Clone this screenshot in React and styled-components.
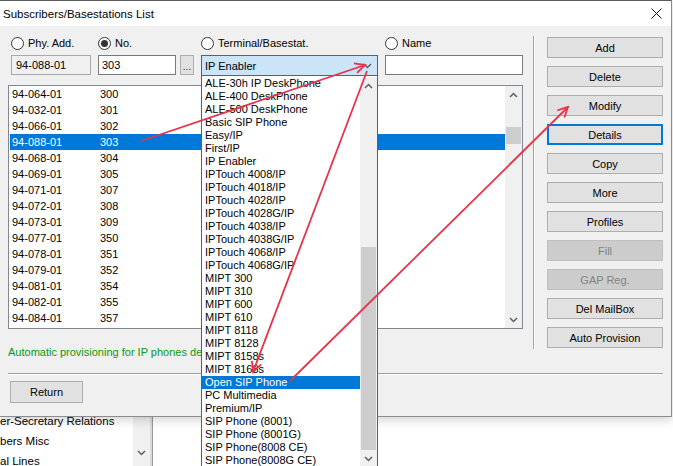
import React from 'react';
import styled, { createGlobalStyle, css } from 'styled-components';

const Global = createGlobalStyle`
  html, body { margin: 0; padding: 0; background: #fff; }
  body {
    font-family: "Liberation Sans", Arial, sans-serif;
    font-size: 11px;
    color: #000;
  }
  #root { width: 673px; height: 466px; }
`;

const Page = styled.div`
  position: relative;
  width: 673px;
  height: 466px;
  overflow: hidden;
  background: #fff;
  display: flex;
  flex-direction: column;
`;

const Window = styled.div`
  position: relative;
  z-index: 2;
  width: 672px;
  height: 417px;
  flex-shrink: 0;
  box-sizing: border-box;
  border-top: 1px solid #5c5c5c;
  border-right: 1px solid #8c8c8c;
  border-bottom: 1px solid #8c8c8c;
  background: #f0f0f0;
  box-shadow: 0 3px 10px rgba(0, 0, 0, 0.18);
  display: flex;
  flex-direction: column;
`;

const TitleBar = styled.div`
  height: 25px;
  flex-shrink: 0;
  background: #fff;
  display: flex;
  align-items: center;
  justify-content: space-between;
  padding: 0 9px 0 3px;
  font-size: 11.5px;
`;

const Body = styled.div`
  flex: 1;
  padding: 10px 8px 0 8px;
  display: flex;
  flex-direction: column;
`;

const MainRow = styled.div`
  display: flex;
  align-items: flex-start;
  gap: 10px;
`;

const LeftCol = styled.div`
  width: 515px;
  padding-top: 1px;
  display: flex;
  flex-direction: column;
`;

const RightCol = styled.div`
  border-left: 1px solid #a0a0a0;
  box-shadow: inset 1px 0 0 #fff;
  padding: 1px 0 1px 13px;
  display: flex;
  flex-direction: column;
  gap: 8px;
`;

const FieldRow = styled.div`
  margin-left: 3px;
  display: grid;
  grid-template-columns: 80px 96px 177px 138px;
  column-gap: 7px;
  align-items: start;
`;

const FieldGroup = styled.div`
  position: relative;
  display: flex;
  flex-direction: column;
  gap: 5px;
`;

const RadioLabel = styled.div`
  display: flex;
  align-items: center;
  gap: 4px;
  height: 13px;
  line-height: 13px;
  white-space: nowrap;
`;

const RadioCircle = styled.span`
  width: 13px;
  height: 13px;
  box-sizing: border-box;
  border: 1px solid #333;
  border-radius: 50%;
  background: #fff;
  display: flex;
  align-items: center;
  justify-content: center;
  flex-shrink: 0;
  &::after {
    content: '';
    width: 7px;
    height: 7px;
    border-radius: 50%;
    background: ${p => (p.$checked ? '#333' : 'transparent')};
  }
`;

const InputLine = styled.div`
  display: flex;
  gap: 4px;
`;

const TextBox = styled.div`
  box-sizing: border-box;
  height: 20px;
  width: ${p => p.$w}px;
  border: 1px solid ${p => (p.$readonly ? '#a8a8a8' : '#7a7a7a')};
  background: ${p => (p.$readonly ? '#f0f0f0' : '#fff')};
  padding: 0 ${p => (p.$readonly ? 4 : 3)}px;
  line-height: 18px;
  white-space: nowrap;
`;

const DotsButton = styled.div`
  box-sizing: border-box;
  width: 14px;
  height: 20px;
  border: 1px solid #adadad;
  background: #e1e1e1;
  display: flex;
  align-items: flex-end;
  justify-content: center;
  line-height: 14px;
  font-size: 10px;
  color: #333;
`;

const Combo = styled.div`
  position: relative;
  box-sizing: border-box;
  height: 21px;
  width: 177px;
  border: 1px solid #0078d7;
  background: #cce4f7;
  padding: 0 0 0 3px;
  display: flex;
  align-items: center;
  justify-content: space-between;
`;

const ComboArrow = styled.span`
  width: 17px;
  display: flex;
  justify-content: center;
  align-items: center;
  margin-right: 1px;
`;

const DropList = styled.div`
  position: absolute;
  top: 20px;
  left: -1px;
  width: 177px;
  box-sizing: border-box;
  border-left: 1px solid #0078d7;
  border-right: 1px solid #0078d7;
  background: #fff;
  padding-top: 1px;
  display: flex;
  z-index: 5;
`;

const DropItems = styled.div`
  flex: 1;
  display: flex;
  flex-direction: column;
`;

const DropItem = styled.div`
  height: 13px;
  line-height: 13px;
  padding-left: 3px;
  white-space: nowrap;
  ${p => p.$selected && css`
    background: #0078d7;
    color: #fff;
  `}
`;

const ListBox = styled.div`
  margin-top: 9px;
  box-sizing: border-box;
  width: 515px;
  height: 244px;
  border: 1px solid #828790;
  background: #fff;
  display: flex;
`;

const ListRows = styled.div`
  flex: 1;
  padding-left: 1px;
  display: flex;
  flex-direction: column;
`;

const ListRow = styled.div`
  height: 16px;
  line-height: 16px;
  display: grid;
  grid-template-columns: 88px 1fr;
  padding-left: 2px;
  ${p => p.$selected && css`
    background: #0078d7;
    color: #fff;
  `}
`;

const ScrollBar = styled.div`
  width: 17px;
  flex-shrink: 0;
  background: #f0f0f0;
  display: flex;
  flex-direction: column;
`;

const ScrollBtn = styled.div`
  height: 17px;
  flex-shrink: 0;
  display: flex;
  align-items: center;
  justify-content: center;
`;

const ScrollTrack = styled.div`
  flex: 1;
  display: flex;
  flex-direction: column;
`;

const Thumb = styled.div`
  margin: 0 1px;
  background: #cdcdcd;
`;

const Notice = styled.div`
  margin-top: 17px;
  height: 13px;
  line-height: 13px;
  color: #0a9a0a;
  white-space: nowrap;
  overflow: hidden;
`;

const Button = styled.div`
  box-sizing: border-box;
  width: ${p => p.$w || 116}px;
  height: ${p => p.$h || 21}px;
  border: 1px solid #adadad;
  background: #e1e1e1;
  display: flex;
  align-items: center;
  justify-content: center;
  white-space: nowrap;
  ${p => p.$focused && css`
    border: 2px solid #0078d7;
  `}
  ${p => p.$disabled && css`
    background: #cccccc;
    border-color: #bfbfbf;
    color: #838383;
  `}
`;

const HSeparator = styled.div`
  margin-top: 14px;
  border-top: 1px solid #a0a0a0;
  border-bottom: 1px solid #fff;
`;

const BottomBar = styled.div`
  padding: 6px 0 0 2px;
`;

const Backdrop = styled.div`
  flex: 1;
  display: flex;
  position: relative;
  z-index: 1;
`;

const BackList = styled.div`
  width: 133px;
  overflow: hidden;
  background: #fff;
  display: flex;
  flex-direction: column;
`;

const BackItems = styled.div`
  margin-top: -6px;
  display: flex;
  flex-direction: column;
`;

const BackItem = styled.div`
  height: 20px;
  line-height: 20px;
  font-size: 11.5px;
  white-space: nowrap;
`;

const BackScroll = styled.div`
  width: 17px;
  background: #f0f0f0;
  display: flex;
  flex-direction: column;
  padding-top: 27px;
`;

const BackDivider = styled.div`
  width: 2px;
  background: #dadada;
  border-right: 1px solid #9a9a9a;
`;

const BackFill = styled.div`
  flex: 1;
  background: #fff;
`;

const Overlay = styled.svg`
  position: absolute;
  left: 0;
  top: 0;
  width: 673px;
  height: 466px;
  z-index: 10;
  pointer-events: none;
`;

const Chevron = ({ up }) => (
  <svg width="9" height="6" viewBox="0 0 9 6">
    <polyline
      points={up ? '1,5 4.5,1.5 8,5' : '1,1 4.5,4.5 8,1'}
      fill="none"
      stroke="#606060"
      strokeWidth="1.5"
    />
  </svg>
);

const Scroll = ({ thumbTop, thumbHeight }) => (
  <ScrollBar>
    <ScrollBtn><Chevron up /></ScrollBtn>
    <ScrollTrack>
      <Thumb style={{ marginTop: thumbTop, height: thumbHeight }} />
    </ScrollTrack>
    <ScrollBtn><Chevron /></ScrollBtn>
  </ScrollBar>
);

const rows = [
  ['94-064-01', '300'], ['94-032-01', '301'], ['94-066-01', '302'], ['94-088-01', '303'],
  ['94-068-01', '304'], ['94-069-01', '305'], ['94-071-01', '307'], ['94-072-01', '308'],
  ['94-073-01', '309'], ['94-077-01', '350'], ['94-078-01', '351'], ['94-079-01', '352'],
  ['94-081-01', '354'], ['94-082-01', '355'], ['94-084-01', '357'],
];

const terminals = [
  'ALE-30h IP DeskPhone', 'ALE-400 DeskPhone', 'ALE-500 DeskPhone', 'Basic SIP Phone',
  'Easy/IP', 'First/IP', 'IP Enabler', 'IPTouch 4008/IP', 'IPTouch 4018/IP',
  'IPTouch 4028/IP', 'IPTouch 4028G/IP', 'IPTouch 4038/IP', 'IPTouch 4038G/IP',
  'IPTouch 4068/IP', 'IPTouch 4068G/IP', 'MIPT 300', 'MIPT 310', 'MIPT 600', 'MIPT 610',
  'MIPT 8118', 'MIPT 8128', 'MIPT 8158s', 'MIPT 8168s', 'Open SIP Phone', 'PC Multimedia',
  'Premium/IP', 'SIP Phone (8001)', 'SIP Phone (8001G)', 'SIP Phone(8008 CE)',
  'SIP Phone(8008G CE)',
];

const buttons = [
  { label: 'Add' }, { label: 'Delete' }, { label: 'Modify' }, { label: 'Details', focused: true },
  { label: 'Copy' }, { label: 'More' }, { label: 'Profiles' }, { label: 'Fill', disabled: true },
  { label: 'GAP Reg.', disabled: true }, { label: 'Del MailBox' }, { label: 'Auto Provision' },
];

const arrows = [
  [141, 141, 365, 65],
  [367, 71, 253, 372],
  [290, 381, 568, 107],
];

export default function App() {
  return (
    <Page>
      <Global />
      <Window>
        <TitleBar>
          <span>Subscribers/Basestations List</span>
          <svg width="11" height="11" viewBox="0 0 11 11">
            <path d="M0.5,0.5 L10.5,10.5 M10.5,0.5 L0.5,10.5" stroke="#111" strokeWidth="1" />
          </svg>
        </TitleBar>
        <Body>
          <MainRow>
            <LeftCol>
              <FieldRow>
                <FieldGroup>
                  <RadioLabel><RadioCircle />Phy. Add.</RadioLabel>
                  <TextBox $w={80} $readonly>94-088-01</TextBox>
                </FieldGroup>
                <FieldGroup>
                  <RadioLabel><RadioCircle $checked />No.</RadioLabel>
                  <InputLine>
                    <TextBox $w={78}>303</TextBox>
                    <DotsButton>...</DotsButton>
                  </InputLine>
                </FieldGroup>
                <FieldGroup>
                  <RadioLabel><RadioCircle />Terminal/Basestat.</RadioLabel>
                  <Combo>
                    <span>IP Enabler</span>
                    <ComboArrow><Chevron /></ComboArrow>
                    <DropList>
                      <DropItems>
                        {terminals.map(t => (
                          <DropItem key={t} $selected={t === 'Open SIP Phone'}>{t}</DropItem>
                        ))}
                      </DropItems>
                      <Scroll thumbTop={153} thumbHeight={203} />
                    </DropList>
                  </Combo>
                </FieldGroup>
                <FieldGroup>
                  <RadioLabel><RadioCircle />Name</RadioLabel>
                  <TextBox $w={138} />
                </FieldGroup>
              </FieldRow>
              <ListBox>
                <ListRows>
                  {rows.map(([a, n]) => (
                    <ListRow key={a} $selected={n === '303'}>
                      <span>{a}</span>
                      <span>{n}</span>
                    </ListRow>
                  ))}
                </ListRows>
                <Scroll thumbTop={24} thumbHeight={17} />
              </ListBox>
              <Notice>Automatic provisioning for IP phones deactivated</Notice>
            </LeftCol>
            <RightCol>
              {buttons.map(b => (
                <Button key={b.label} $focused={b.focused} $disabled={b.disabled}>
                  {b.label}
                </Button>
              ))}
            </RightCol>
          </MainRow>
          <HSeparator />
          <BottomBar>
            <Button $w={73} $h={22}>Return</Button>
          </BottomBar>
        </Body>
      </Window>
      <Backdrop>
        <BackList>
          <BackItems>
            <BackItem>er-Secretary Relations</BackItem>
            <BackItem>bers Misc</BackItem>
            <BackItem>al Lines</BackItem>
          </BackItems>
        </BackList>
        <BackScroll>
          <ScrollBtn><Chevron /></ScrollBtn>
        </BackScroll>
        <BackDivider />
        <BackFill />
      </Backdrop>
      <Overlay viewBox="0 0 673 466">
        <defs>
          <marker
            id="head"
            markerUnits="userSpaceOnUse"
            markerWidth="14"
            markerHeight="14"
            refX="12"
            refY="7"
            orient="auto"
          >
            <path d="M2,2 L12,7 L2,12" fill="none" stroke="#e5344b" strokeWidth="1.8" />
          </marker>
        </defs>
        {arrows.map(([x1, y1, x2, y2], i) => (
          <line
            key={i}
            x1={x1}
            y1={y1}
            x2={x2}
            y2={y2}
            stroke="#e5344b"
            strokeWidth="1.8"
            markerEnd="url(#head)"
          />
        ))}
      </Overlay>
    </Page>
  );
}
